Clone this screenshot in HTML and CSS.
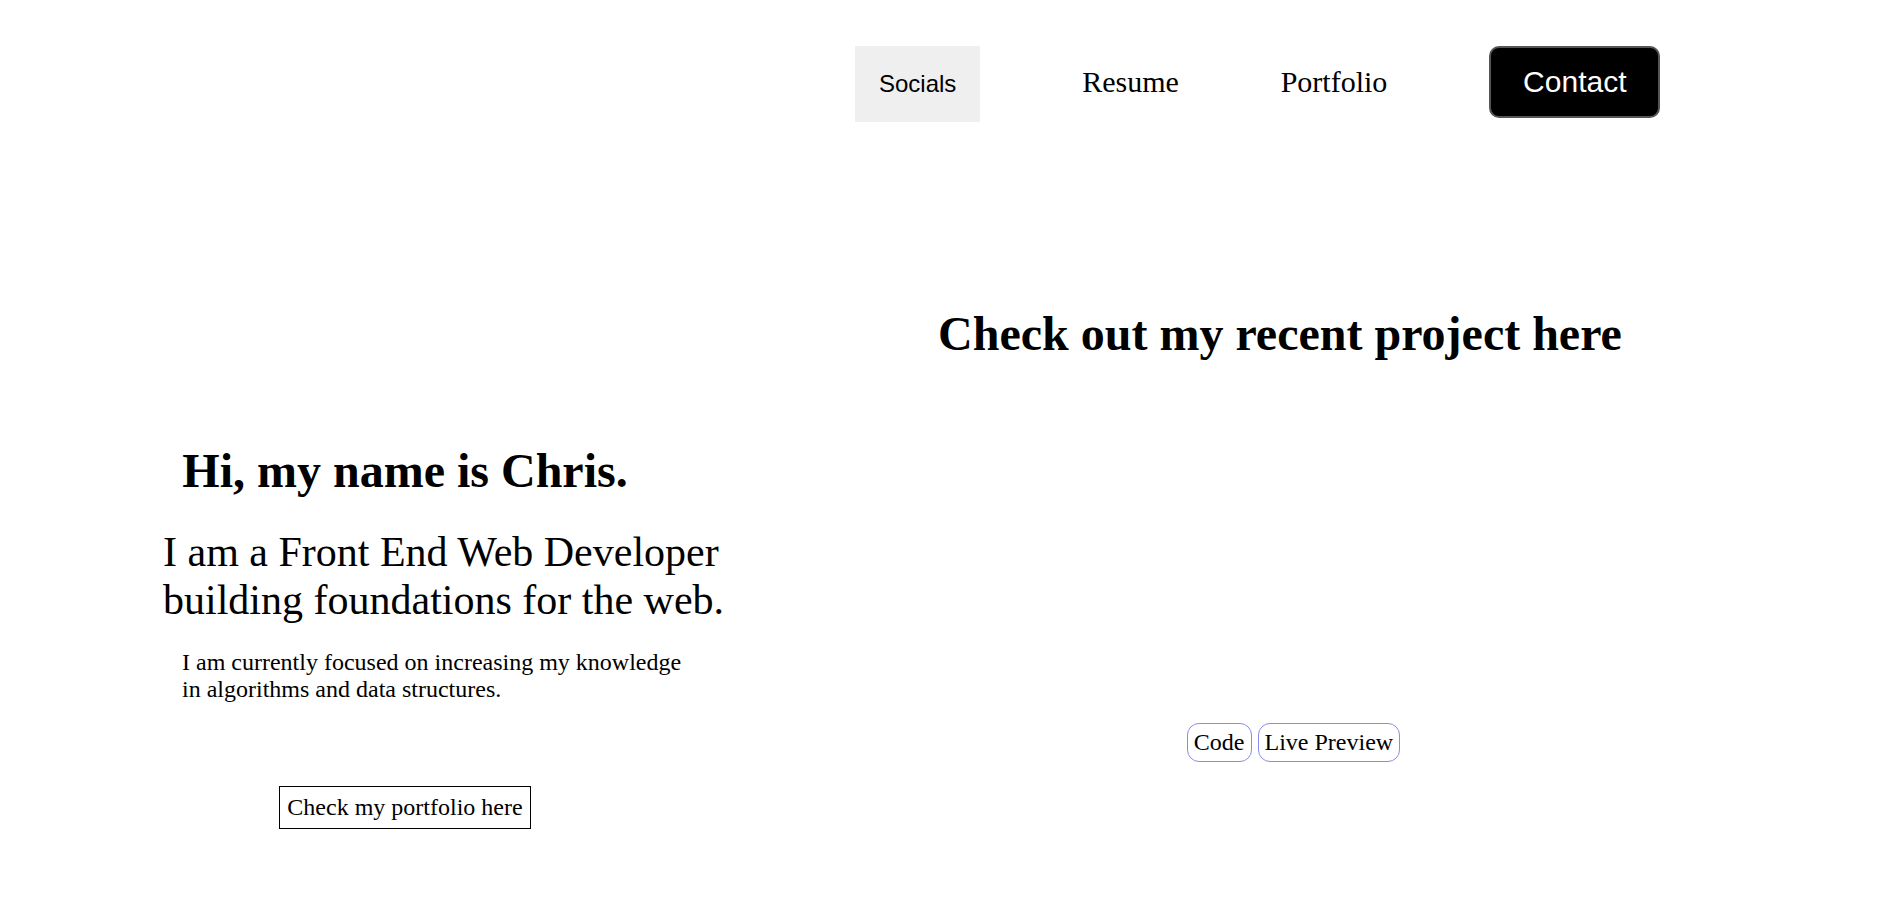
FILE: index.html
```html
<!DOCTYPE html>
<html lang="en">
<head>
<meta charset="utf-8">
<title>Chris - Front End Web Developer</title>
<link rel="stylesheet" href="styles.css">
</head>
<body>
<div class="page">
  <header class="top">
    <div class="top-spacer"></div>
    <nav class="nav">
      <button class="nav-socials" type="button">Socials</button>
      <a class="nav-link" href="#resume">Resume</a>
      <a class="nav-link" href="#portfolio">Portfolio</a>
      <button class="nav-contact" type="button">Contact</button>
    </nav>
  </header>
  <main class="hero">
    <section class="intro">
      <h1 class="intro-title">Hi, my name is Chris.</h1>
      <h2 class="intro-sub">I am a Front End Web Developer building foundations for the web.</h2>
      <p class="intro-text">I am currently focused on increasing my knowledge in algorithms and data structures.</p>
      <div class="intro-action">
        <button class="outline-btn" type="button">Check my portfolio here</button>
      </div>
    </section>
    <section class="project">
      <h2 class="project-title">Check out my recent project here</h2>
      <div class="project-links"><button class="pill" type="button">Code</button> <button class="pill" type="button">Live Preview</button></div>
    </section>
  </main>
</div>
</body>
</html>
```

FILE: styles.css
```css
html, body {
  margin: 0;
  padding: 0;
  background: #ffffff;
}

body {
  font-family: "Liberation Serif", "Times New Roman", serif;
  color: #000000;
}

.top {
  display: grid;
  grid-template-columns: 811px 1fr;
  padding-top: 46px;
}

.nav {
  display: flex;
  align-items: baseline;
  gap: 101.8px;
  padding-left: 44px;
}

.nav-socials {
  font-family: "Liberation Sans", Arial, sans-serif;
  font-size: 24px;
  line-height: normal;
  color: #000000;
  background: #efefef;
  border: none;
  border-radius: 0;
  padding: 24px;
  margin: 0;
}

.nav-link {
  font-family: "Liberation Serif", "Times New Roman", serif;
  font-size: 30px;
  color: #000000;
  text-decoration: none;
}

.nav-contact {
  font-family: "Liberation Sans", Arial, sans-serif;
  font-size: 30px;
  line-height: normal;
  color: #ffffff;
  background: #000000;
  border: 2px solid #555555;
  border-radius: 10px;
  padding: 17px 32px;
  margin: 0;
}

.hero {
  display: grid;
  grid-template-columns: 810px 940px;
}

.intro-title {
  font-size: 48px;
  font-weight: bold;
  line-height: normal;
  text-align: center;
  margin: 321px 0 0 0;
}

.intro-sub {
  font-size: 42px;
  font-weight: normal;
  line-height: normal;
  width: 600px;
  margin: 30px 0 0 163px;
}

.intro-text {
  font-size: 24px;
  line-height: normal;
  width: 510px;
  margin: 25px 0 0 182px;
}

.intro-action {
  text-align: center;
  margin-top: 83px;
}

.outline-btn {
  font-family: "Liberation Serif", "Times New Roman", serif;
  font-size: 24px;
  line-height: normal;
  color: #000000;
  background: #ffffff;
  border: 1px solid #000000;
  border-radius: 0;
  padding: 7px;
  margin: 0;
}

.project {
  text-align: center;
}

.project-title {
  font-size: 48px;
  font-weight: bold;
  line-height: normal;
  margin: 184px 0 0 0;
}

.project-links {
  font-size: 24px;
  margin-top: 362px;
  padding-left: 27px;
}

.pill {
  font-family: "Liberation Serif", "Times New Roman", serif;
  font-size: 24px;
  line-height: normal;
  color: #000000;
  background: #ffffff;
  border: 1px solid #8a8af0;
  border-radius: 12px;
  padding: 5px 6px;
  margin: 0;
}
```
